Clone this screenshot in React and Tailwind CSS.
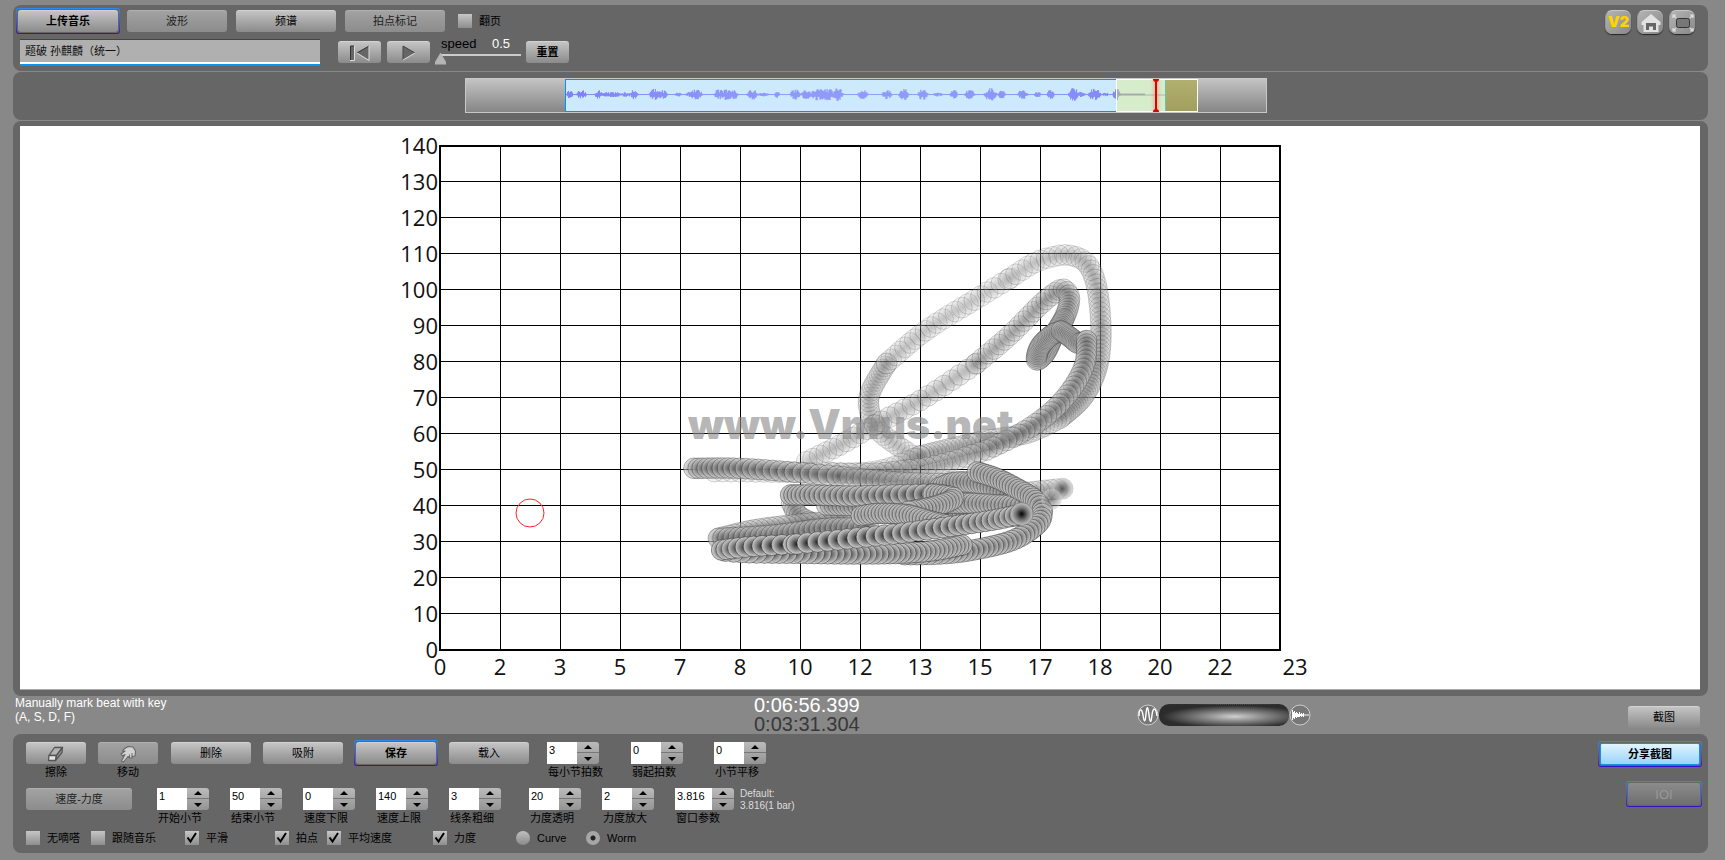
import { useState, useId } from 'react';

const WAVE_BLOBS = [
  [3, 6, 3], [15, 7, 4], [32, 7, 3], [45, 4, 9], [60, 4, 4], [68, 8, 3], [88, 9, 4], [96, 7, 4], [112, 3, 3],
  [124, 4, 4], [130, 8, 5], [153, 9, 4], [161, 9, 5], [168, 7, 3], [186, 8, 4], [197, 3, 5], [211, 6, 2],
  [229, 8, 4], [240, 7, 4], [252, 9, 6], [262, 9, 5], [272, 10, 4], [297, 7, 4], [321, 7, 4], [338, 9, 4],
  [357, 8, 4], [372, 3, 4], [388, 7, 3], [404, 7, 4], [425, 10, 5], [436, 6, 3], [457, 7, 4], [472, 4, 3],
  [485, 7, 3], [508, 10, 4], [515, 4, 4], [529, 9, 5], [540, 3, 3], [551, 9, 3],
];

const X_LABELS = [0, 2, 3, 5, 7, 8, 10, 12, 13, 15, 17, 18, 20, 22, 23];
const Y_LABELS = [140, 130, 120, 110, 100, 90, 80, 70, 60, 50, 40, 30, 20, 10, 0];

// Strokes of the worm, oldest first. Three trace units make one pixel.
// o: opacity at start and end, s: distance between circles at start and end
const WORM = [
  { o: [0.14, 0.16], s: [16, 9], p: [[830, 715], [770, 675], [715, 630], [688, 570], [692, 515], [740, 430]] },
  { o: [0.16, 0.18], s: [16, 25], p: [[740, 430], [860, 330], [1020, 230], [1110, 175]] },
  { o: [0.17, 0.22], s: [22, 7], p: [[1110, 175], [1180, 130], [1240, 110], [1290, 106], [1340, 130], [1370, 200], [1383, 330], [1372, 440], [1330, 530], [1260, 595]] },
  { o: [0.18, 0.22], s: [13, 11], p: [[1260, 595], [1160, 640], [1020, 665], [840, 708]] },
  { o: [0.2, 0.2], s: [18, 25], p: [[840, 708], [700, 755], [480, 757], [300, 755], [200, 755]] },
  { o: [0.2, 0.28], s: [20, 28], p: [[500, 725], [600, 675], [710, 612], [860, 530], [1010, 430]] },
  { o: [0.28, 0.38], s: [22, 7], p: [[1010, 430], [1110, 345], [1200, 255], [1250, 215], [1272, 208], [1288, 230], [1284, 265], [1270, 300]] },
  { o: [0.4, 0.4], s: [5, 5], p: [[1270, 300], [1240, 350], [1215, 400], [1190, 420], [1200, 380], [1235, 345], [1265, 333]] },
  { o: [0.4, 0.4], s: [5, 5], p: [[1265, 333], [1295, 355], [1315, 370], [1340, 362]] },
  { o: [0.45, 0.45], s: [10, 22], p: [[1340, 362], [1335, 430], [1300, 500], [1240, 570], [1150, 635], [1040, 690]] },
  { o: [0.36, 0.32], s: [22, 26], p: [[1040, 690], [930, 725], [840, 745], [700, 760], [560, 758]] },
  { o: [0.6, 0.6], s: [11, 28], p: [[162, 745], [300, 745], [480, 758], [610, 770]] },
  { o: [0.35, 0.35], s: [20, 12], p: [[610, 770], [760, 785], [900, 790], [1010, 785]] },
  { o: [0.25, 0.3], s: [18, 14], p: [[1268, 806], [1180, 815], [1080, 830]] },
  { o: [0.4, 0.4], s: [11, 11], p: [[455, 850], [480, 890], [545, 915], [600, 905]] },
  { o: [0.4, 0.4], s: [18, 14], p: [[620, 900], [480, 912], [340, 930], [235, 955]] },
  { o: [0.5, 0.5], s: [14, 16], p: [[235, 955], [400, 945], [560, 925], [700, 925]] },
  { o: [0.65, 0.65], s: [11, 11], p: [[560, 855], [700, 860], [900, 870], [1060, 890], [1200, 880]] },
  { o: [0.65, 0.65], s: [10, 10], p: [[900, 802], [950, 786], [1020, 792], [1080, 815], [1160, 840]] },
  { o: [0.75, 0.75], s: [11, 11], p: [[900, 850], [1000, 850], [1080, 855], [1200, 858]] },
  { o: [0.85, 0.85], s: [9, 25], p: [[452, 825], [520, 825], [640, 828], [750, 825], [880, 822]] },
  { o: [0.8, 0.8], s: [10, 10], p: [[880, 822], [935, 830], [935, 840], [880, 860], [800, 875]] },
  { o: [0.8, 0.8], s: [10, 10], p: [[1012, 756], [1070, 775], [1130, 805], [1180, 835], [1205, 865]] },
  { o: [0.85, 0.85], s: [10, 10], p: [[664, 887], [720, 880], [800, 884], [860, 900], [920, 915]] },
  { o: [0.8, 0.8], s: [10, 18], p: [[1207, 870], [1195, 910], [1120, 960], [1000, 990], [900, 1002], [780, 1004]] },
  { o: [0.85, 0.85], s: [10, 25], p: [[966, 975], [880, 992], [780, 1000], [640, 1002], [480, 1000], [320, 998], [245, 992]] },
  { o: [0.9, 1], s: [11, 34], p: [[245, 990], [330, 980], [470, 972]] },
  { o: [1, 0.9], s: [32, 15], p: [[470, 972], [620, 957], [780, 940], [940, 918], [1060, 900], [1145, 882]] },
];

const lerp = (a, b, t) => a + (b - a) * t;

function spline(points) {
  const out = [];
  for (let i = 0; i < points.length - 1; i++) {
    const p0 = points[i - 1] || points[i];
    const p1 = points[i];
    const p2 = points[i + 1];
    const p3 = points[i + 2] || p2;
    for (let k = 0; k < 80; k++) {
      const t = k / 80;
      out.push([0, 1].map(a => 0.5 * (2 * p1[a] + (p2[a] - p0[a]) * t
        + (2 * p0[a] - 5 * p1[a] + 4 * p2[a] - p3[a]) * t * t
        + (3 * p1[a] - p0[a] - 3 * p2[a] + p3[a]) * t * t * t)));
    }
  }
  out.push(points[points.length - 1]);
  return out;
}

function circlesOf({ p, o, s }) {
  const line = spline(p);
  const circles = [];
  let gone = Infinity;
  line.forEach((pt, i) => {
    const t = i / (line.length - 1);
    if (i > 0) gone += Math.hypot(pt[0] - line[i - 1][0], pt[1] - line[i - 1][1]);
    if (gone >= lerp(s[0], s[1], t)) {
      circles.push({ x: pt[0], y: pt[1], o: lerp(o[0], o[1], t) });
      gone = 0;
    }
  });
  return circles;
}

const WORM_CIRCLES = WORM.flatMap(circlesOf);

function Chart() {
  return (
    <svg viewBox="0 0 960 563" className="block w-[960px] max-w-full mx-auto" role="img" aria-label="Worm">
      <defs>
        <radialGradient id="ball">
          <stop offset="0" stopColor="#1c1c1c" />
          <stop offset="0.5" stopColor="#7a7a7a" />
          <stop offset="1" stopColor="#d4d4d4" />
        </radialGradient>
        <radialGradient id="head">
          <stop offset="0" stopColor="#000" />
          <stop offset="0.5" stopColor="#6e6e6e" />
          <stop offset="1" stopColor="#c8c8c8" />
        </radialGradient>
      </defs>
      <g stroke="#000" shapeRendering="crispEdges">
        {Y_LABELS.slice(1, -1).map((v, i) => <line key={v} x1="60" x2="900" y1={55.5 + i * 36} y2={55.5 + i * 36} />)}
        {X_LABELS.slice(1, -1).map((v, i) => <line key={v} x1={120.5 + i * 60} x2={120.5 + i * 60} y1="20" y2="524" />)}
        <rect x="60" y="20" width="840" height="504" fill="none" strokeWidth="2" />
      </g>
      <g className="font-['Open_Sans',sans-serif] text-[22px]" fill="#111">
        {Y_LABELS.map((v, i) => <text key={v} x="58" y={28 + i * 36} textAnchor="end">{v}</text>)}
        {X_LABELS.map((v, i) => <text key={v} x={i === 14 ? 915 : 60 + i * 60} y="549" textAnchor="middle">{v}</text>)}
      </g>
      <circle cx="150" cy="387" r="14" fill="none" stroke="#f22" />
      <g transform="translate(260 94) scale(0.33333)">
        {WORM_CIRCLES.map((c, i) => (
          <circle
            key={i}
            cx={c.x}
            cy={c.y}
            r="31"
            fill="url(#ball)"
            fillOpacity={c.o}
            stroke="#333"
            strokeOpacity={Math.min(1, c.o * 0.8 + 0.2)}
            strokeWidth="1.8"
          />
        ))}
        <circle cx="1268" cy="806" r="31" fill="url(#ball)" opacity="0.6" />
        <circle cx="1235" cy="838" r="31" fill="url(#ball)" opacity="0.5" />
        <circle cx="1145" cy="882" r="34" fill="url(#head)" stroke="#777" strokeWidth="2" />
      </g>
      <text x="308" y="313" className="font-['Inter',sans-serif] text-[41px] font-black" fill="#8c8c8c" fillOpacity="0.65">www.Vmus.net</text>
    </svg>
  );
}

function Waveform() {
  let d = '';
  for (let x = 0; x < 560; x++) {
    let a = 0.5;
    WAVE_BLOBS.forEach(([c, h, w]) => {
      const u = (x - c) / w;
      a = Math.max(a, h * 0.65 * Math.exp(-u * u * u * u * 0.6));
    });
    const n = a > 1 ? 0.35 + 0.65 * Math.abs(Math.sin(x * x * 1.37 + x)) : 1;
    const m = a > 1 ? 0.35 + 0.65 * Math.abs(Math.sin(x * x * 0.83 + x * 2)) : 1;
    d += `M${x + 0.5} ${15 - a * n}V${15 + a * m}`;
  }
  return (
    <svg viewBox="0 0 600 32" preserveAspectRatio="none" className="absolute inset-0 w-full h-full">
      <path d={d} stroke="#7c80f8" strokeWidth="1" />
      <path d="M553 15H580" stroke="#8084c8" strokeWidth="2" />
      <path d="M580 15.5H600" stroke="#7aa0d8" />
    </svg>
  );
}

function Timeline() {
  return (
    <div className="relative flex w-[802px] h-[35px] border border-[#c8c8c8] bg-linear-to-b from-[#c4c4c4] to-[#868686]">
      <div className="w-[99px]" />
      <div className="relative w-[600px] h-[33px] bg-[#cdeafd] border-y border-l border-[#0094ea]">
        <Waveform />
      </div>
      <div className="w-[32px] bg-linear-to-b from-[#968e72] to-[#7c7458] border-l border-[#2aa8d8]" />
      <div className="absolute left-[650px] top-0 w-[82px] h-[33px] border border-white bg-[#e8f06a]/35" />
      <div className="absolute left-[689px] top-0 w-[2px] h-[33px] bg-[#d00] shadow-[0_0_4px_#f66]">
        <span className="absolute -left-[2px] top-0 w-[6px] h-[3px] bg-[#d00] rounded-b-full" />
        <span className="absolute -left-[2px] bottom-0 w-[6px] h-[3px] bg-[#d00] rounded-t-full" />
      </div>
    </div>
  );
}

const FACE = 'flex items-center justify-center rounded-[3px] h-[22px] text-[11px] leading-none text-black bg-linear-to-b from-[#c4c4c4] to-[#8b8b8b] border-t border-[#d2d2d2]';
const PRESSED = 'flex items-center justify-center rounded-[3px] h-[22px] text-[11px] leading-none text-[#222] bg-linear-to-b from-[#a2a2a2] to-[#8c8c8c] border-t border-[#b0b0b0]';

function Btn({ pressed, className = '', children, ...rest }) {
  return <button type="button" className={`${pressed ? PRESSED : FACE} ${className}`} {...rest}>{children}</button>;
}

// Wraps a button in the blue to violet frame
function Framed({ className = '', children }) {
  return (
    <div className={`rounded-[3px] p-px bg-linear-to-b from-[#2a8cf0] to-[#3c08c0] ${className}`}>
      <div className="rounded-[2px] p-px bg-[#666]">{children}</div>
    </div>
  );
}

function Check({ label, checked = false, className = '' }) {
  const [on, setOn] = useState(checked);
  return (
    <label className={`flex items-center gap-[7px] text-[11px] leading-[14px] whitespace-nowrap ${className}`}>
      <span className="relative w-[14px] h-[14px]">
        <input
          type="checkbox"
          checked={on}
          onChange={e => setOn(e.target.checked)}
          className="block appearance-none w-[14px] h-[14px] bg-linear-to-b from-[#c6c6c6] to-[#8e8e8e]"
        />
        {on && (
          <svg viewBox="0 0 14 14" className="absolute inset-0 pointer-events-none">
            <path d="M2.5 6.5L5.5 10.5L11 2" fill="none" stroke="#000" strokeWidth="2" />
          </svg>
        )}
      </span>
      {label}
    </label>
  );
}

function Radio({ label, checked, onChange, className = '' }) {
  return (
    <label className={`flex items-center gap-[7px] text-[11px] leading-[14px] ${className}`}>
      <input
        type="radio"
        name="mode"
        checked={checked}
        onChange={onChange}
        className="appearance-none w-[14px] h-[14px] rounded-full bg-linear-to-b from-[#c0c0c0] to-[#8a8a8a] checked:bg-[radial-gradient(circle,#222_2px,#a6a6a6_3px)]"
      />
      {label}
    </label>
  );
}

function Stepper({ label, value, wide, className = 'w-[73px]' }) {
  const id = useId();
  const [val, setVal] = useState(value);
  const step = n => setVal(String(Number(val) + n));
  return (
    <div className={`shrink-0 ${className}`}>
      <div className="flex h-[22px]">
        <input
          id={id}
          value={val}
          onChange={e => setVal(e.target.value)}
          className={`${wide ? 'w-[37px]' : 'w-[30px]'} h-[22px] bg-white pl-[2px] pb-[6px] text-[11px] leading-[14px] text-black outline-none`}
        />
        <div className="flex flex-col w-[22px] rounded-r-[3px] bg-linear-to-b from-[#bbb] to-[#949494]">
          <button type="button" aria-label={`${label} +`} onClick={() => step(1)} className="flex items-center justify-center h-[11px] border-b border-[#777]">
            <svg viewBox="0 0 8 4" className="w-[8px] h-[4px]"><path d="M0 4L4 0L8 4Z" /></svg>
          </button>
          <button type="button" aria-label={`${label} -`} onClick={() => step(-1)} className="flex items-center justify-center h-[11px]">
            <svg viewBox="0 0 8 4" className="w-[8px] h-[4px]"><path d="M0 0L4 4L8 0Z" /></svg>
          </button>
        </div>
      </div>
      <label htmlFor={id} className="block pl-px mt-px text-[11px] leading-[14px] whitespace-nowrap">{label}</label>
    </div>
  );
}

function CornerButton({ label, children }) {
  return (
    <button type="button" aria-label={label} className="flex items-center justify-center w-[26px] h-[24px] rounded-[7px] bg-linear-to-br from-[#b4b4b4] to-[#888] border-t border-l border-t-[#c8c8c8] border-l-[#999] shadow-[0_1px_1px_#222]">
      {children}
    </button>
  );
}

function TopPanel() {
  const [speed, setSpeed] = useState(0.5);
  return (
    <section className="flex justify-between h-[66px] rounded-lg bg-[#666] pl-[3px] pr-[13px] pt-[3px]">
      <div>
        <div className="flex items-center">
          <Framed><Btn className="w-[100px] font-bold">上传音乐</Btn></Framed>
          <Btn pressed className="w-[100px] ml-[7px]">波形</Btn>
          <Btn className="w-[100px] ml-[9px]">频谱</Btn>
          <Btn pressed className="w-[100px] ml-[9px]">拍点标记</Btn>
          <Check label="翻页" className="ml-[13px]" />
        </div>
        <div className="flex items-start mt-[5px] pl-[4px]">
          <input
            aria-label="title"
            defaultValue="题破 孙麒麟（统一）"
            className="w-[300px] h-[27px] px-[5px] pb-[5px] bg-[#b0b0b0] border-t border-t-[#444] border-b-2 border-b-[#0a94f0] shadow-[inset_0_-2px_0_#fff] text-[11px] text-[#111] outline-none"
          />
          <Btn aria-label="rewind" className="w-[43px] ml-[18px] mt-[2px]">
            <svg viewBox="0 0 22 16" className="w-[22px] h-[16px]">
              <path d="M1 1H5V15H1ZM20 1V15L8 8Z" fill="#666" />
              <path d="M1.500 15V1H5M8 8L20 1" fill="none" stroke="#333" />
              <path d="M5.500 1V15.500H1M8 8L20 15.500V1" fill="none" stroke="#ddd" />
            </svg>
          </Btn>
          <Btn aria-label="play" className="w-[43px] ml-[6px] mt-[2px]">
            <svg viewBox="0 0 14 16" className="w-[14px] h-[16px]">
              <path d="M1 1V15L13 8Z" fill="#666" />
              <path d="M1 15V1L13 8" fill="none" stroke="#444" />
              <path d="M1 15L13 8" fill="none" stroke="#ddd" />
            </svg>
          </Btn>
          <div className="w-[82px] ml-[9px] -mt-[3px]">
            <div className="flex justify-between pl-[2px] pr-[11px] text-[13px] leading-[15px]">
              <label htmlFor="speed">speed</label>
              <output htmlFor="speed" className="text-white">{speed}</output>
            </div>
            <input
              id="speed"
              type="range"
              min="0.5"
              max="2"
              step="0.1"
              value={speed}
              onChange={e => setSpeed(e.target.value)}
              className="block appearance-none w-[86px] -ml-[4px] h-[15px] bg-[linear-gradient(#ccc,#ccc)] bg-[length:81px_2px] bg-[position:100%_3px] bg-no-repeat [&::-webkit-slider-thumb]:appearance-none [&::-webkit-slider-thumb]:w-[11px] [&::-webkit-slider-thumb]:h-[12px] [&::-webkit-slider-thumb]:bg-[#b4b4b4] [&::-webkit-slider-thumb]:[clip-path:polygon(50%_0,100%_80%,100%_100%,0_100%,0_80%)]"
            />
          </div>
          <Btn className="w-[43px] ml-[5px] mt-[2px] font-bold">重置</Btn>
        </div>
      </div>
      <div className="flex gap-[6px] pt-[2px]">
        <CornerButton label="V2"><span className="font-['Inter',sans-serif] text-[15px] font-black text-[#ffd200]">V2</span></CornerButton>
        <CornerButton label="home">
          <svg viewBox="0 0 20 20" className="w-[20px] h-[20px]">
            <path d="M10 1L0.500 9V12H2.500V19H17.500V12H19.500V9Z" fill="#e2e2e2" />
            <path d="M5 17V10H15V17H12V13.500H8V17Z" fill="#666" />
          </svg>
        </CornerButton>
        <CornerButton label="fullscreen">
          <svg viewBox="0 0 22 20" className="w-[22px] h-[20px]" fill="none">
            <rect x="4.500" y="5.500" width="13" height="9" rx="2" fill="#777" stroke="#333" />
            <path d="M1 5V2H4M1 2L4 5M18 2H21V5M21 2L18 5M1 15V18H4M1 18L4 15M21 15V18H18M21 18L18 15" stroke="#e0e0e0" strokeWidth="1.200" />
          </svg>
        </CornerButton>
      </div>
    </section>
  );
}

function StatusBar() {
  return (
    <div className="grid grid-cols-[741fr_383fr_491fr_80fr] h-[38px]">
      <p className="pl-[2px] text-[12px] leading-[14px] text-white">Manually mark beat with key<br />(A, S, D, F)</p>
      <div className="text-[20px] leading-[19px]">
        <div className="text-white">0:06:56.399</div>
        <div className="text-[#383838]">0:03:31.304</div>
      </div>
      <div className="flex items-center h-[22px] mt-[8px]">
        <svg viewBox="0 0 22 22" className="w-[22px] h-[22px]" fill="none" stroke="#fff">
          <circle cx="11" cy="11" r="10" fill="#777" stroke="#ccc" />
          <path d="M2 12C2 4 5 4 6 11S8 20 9 10S11 3 12 11S14 20 15 11S19 4 20 12" strokeWidth="1.400" />
        </svg>
        <div className="w-[130px] h-[22px] rounded-[10px] bg-[radial-gradient(ellipse_at_58%_55%,#d0d0d0_0%,#8a8a8a_28%,#2c2c2c_68%)] border-t border-dotted border-[#333]" />
        <svg viewBox="0 0 22 22" className="w-[22px] h-[22px]" fill="none" stroke="#fff">
          <circle cx="11" cy="11" r="10" fill="#777" stroke="#ccc" />
          <path d="M3.500 6V16M4.500 8V14M5.500 7V15M6.500 9V13M7.500 8V14M8.500 9V13M9.500 10V13M10.500 8V13M11.500 10V12M12.500 9V13M13.500 10V12M14.500 9V13M3 11H20" />
        </svg>
      </div>
      <Btn className="w-[72px] mt-[10px]">截图</Btn>
    </div>
  );
}

function Controls() {
  const [mode, setMode] = useState('worm');
  return (
    <section className="flex justify-between h-[119px] rounded-lg bg-[#666] pl-[13px] pr-[6px] pt-[8px]">
      <div>
        <div className="flex items-start h-[46px]">
          <div className="w-[60px] text-center text-[11px] leading-[14px]">
            <Btn aria-label="擦除" className="w-[60px] mb-px">
              <svg viewBox="0 0 18 16" className="w-[18px] h-[16px]" stroke="#555" strokeWidth="1.300" strokeLinejoin="round">
                <path d="M2 9.500L7.500 1.500H15.500L9.500 9.500Z" fill="#b4b4b4" />
                <path d="M2 9.500H9.500L8.500 14.500H1.500Z" fill="#e4e4e4" />
                <path d="M9.500 9.500L15.500 1.500L15 6.500L8.500 14.500Z" fill="#999" />
              </svg>
            </Btn>
            擦除
          </div>
          <div className="w-[60px] ml-[12px] text-center text-[11px] leading-[14px]">
            <Btn pressed aria-label="移动" className="w-[60px] mb-px">
              <svg viewBox="0 0 18 18" className="w-[18px] h-[18px]">
                <path d="M5 4L9 1.500L14 2L16.500 6L16 11L13 11.500V13L10.500 13L9 11.500L4.500 17L2.500 16L6 9.500L3.500 11L2 9L6 6L3.500 6Z" fill="#d2d2d2" stroke="#666" strokeWidth="1.100" strokeLinejoin="round" />
                <path d="M10.500 13V9.500M13 11.500V8" stroke="#666" />
              </svg>
            </Btn>
            移动
          </div>
          <Btn className="w-[80px] ml-[13px]">删除</Btn>
          <Btn className="w-[80px] ml-[12px]">吸附</Btn>
          <Framed className="ml-[11px] -mt-[2px]"><Btn className="w-[80px] font-bold">保存</Btn></Framed>
          <Btn className="w-[80px] ml-[11px]">载入</Btn>
          <Stepper label="每小节拍数" value="3" className="w-[84px] ml-[18px]" />
          <Stepper label="弱起拍数" value="0" className="w-[83px]" />
          <Stepper label="小节平移" value="0" />
        </div>
        <div className="flex items-start h-[43px]">
          <Btn pressed className="w-[106px] mr-[25px]">速度-力度</Btn>
          <Stepper label="开始小节" value="1" />
          <Stepper label="结束小节" value="50" />
          <Stepper label="速度下限" value="0" />
          <Stepper label="速度上限" value="140" />
          <Stepper label="线条粗细" value="3" className="w-[80px]" />
          <Stepper label="力度透明" value="20" />
          <Stepper label="力度放大" value="2" />
          <Stepper label="窗口参数" value="3.816" wide className="w-[65px]" />
          <p className="text-[10px] leading-[12px] text-[#ddd]">Default:<br />3.816(1 bar)</p>
        </div>
        <div className="flex items-center h-[14px]">
          <Check label="无嘀嗒" className="w-[65px]" />
          <Check label="跟随音乐" className="w-[94px]" />
          <Check label="平滑" checked className="w-[90px]" />
          <Check label="拍点" checked className="w-[52px]" />
          <Check label="平均速度" checked className="w-[106px]" />
          <Check label="力度" checked className="w-[83px]" />
          <Radio label="Curve" checked={mode === 'curve'} onChange={() => setMode('curve')} className="w-[70px]" />
          <Radio label="Worm" checked={mode === 'worm'} onChange={() => setMode('worm')} />
        </div>
      </div>
      <div className="flex flex-col items-end gap-[14px] -mt-px">
        <Framed>
          <button type="button" className="block w-[100px] h-[22px] rounded-[2px] border border-[#1a90e0] bg-linear-to-b from-[#e0f4ff] to-[#98d4fa] text-[11px] leading-none font-bold">分享截图</button>
        </Framed>
        <Framed>
          <button type="button" disabled className="block w-[72px] h-[22px] rounded-[2px] bg-linear-to-b from-[#8c8c8c] to-[#6e6e6e] text-[13px] leading-none text-[#999]">IOI</button>
        </Framed>
      </div>
    </section>
  );
}

export default function App() {
  return (
    <main className="min-h-screen bg-[#888] pt-[5px] pl-[13px] pr-[17px] pb-[7px] text-black font-['Liberation_Sans','Noto_Sans_CJK_SC',sans-serif]">
      <TopPanel />
      <section className="flex items-center justify-center h-[48px] mt-px pl-[10px] pb-[2px] rounded-lg bg-[#666]">
        <Timeline />
      </section>
      <section className="mt-px rounded-lg bg-[#666] pt-[5px] pl-[7px] pr-[8px] pb-[6px]">
        <div className="bg-white border-b border-[#aaa]">
          <Chart />
        </div>
      </section>
      <StatusBar />
      <Controls />
    </main>
  );
}
